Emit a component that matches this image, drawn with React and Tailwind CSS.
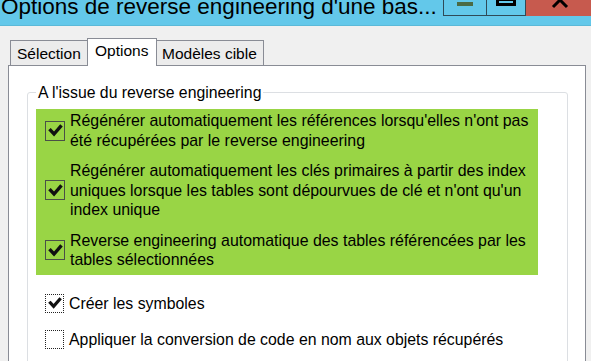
import React from 'react'

const GREEN_ITEMS = [
  [
    "Régénérer automatiquement les références lorsqu'elles n'ont pas",
    'été récupérées par le reverse engineering',
  ],
  [
    'Régénérer automatiquement les clés primaires à partir des index',
    "uniques lorsque les tables sont dépourvues de clé et n'ont qu'un",
    'index unique',
  ],
  [
    'Reverse engineering automatique des tables référencées par les',
    'tables sélectionnées',
  ],
]

function Check({ size }) {
  return (
    <svg width={size} height={size} viewBox="0 0 15 15" className="block">
      <polyline
        points="3.2,7.4 6.2,10.6 11.8,4.2"
        fill="none"
        stroke="#111"
        strokeWidth="3"
        strokeLinecap="square"
      />
    </svg>
  )
}

function TitleBar() {
  return (
    <div className="flex h-[26px] bg-[#63c8ea] border-b border-[#5bb9d8]">
      <div className="min-w-0 flex-1 overflow-hidden whitespace-nowrap pl-[1px] text-[22.5px] leading-[22px] -mt-[4px] text-black">
        Options de reverse engineering d'une bas...
      </div>
      <div className="flex h-[16px] items-start">
        <div className="relative h-[16px] w-[44px] border-x border-b border-[#2f4a57]">
          <div className="absolute left-[13px] top-[2px] h-[4px] w-[16px] bg-[#4b6b45]" />
        </div>
        <div className="relative h-[16px] w-[39px] border-r border-b border-[#2f4a57]">
          <div className="absolute left-[9px] -top-[2px] h-[8px] w-[20px] border-[3px] border-black" />
        </div>
        <div className="relative h-[16px] w-[65px] bg-[#c75a4e]">
          <svg width="65" height="16" className="absolute left-0 top-0">
            <polyline points="27,7 34,0 41,7" fill="none" stroke="#000" strokeWidth="3" />
          </svg>
        </div>
      </div>
    </div>
  )
}

function Tabs() {
  return (
    <div className="mt-[12px] flex h-[27px] items-end pl-[10px] text-[15.5px] leading-[18px]">
      <div className="h-[25px] w-[77px] border-l border-t border-[#898c95] bg-[#ececec] pl-[6px] pt-[4px]">
        Sélection
      </div>
      <div className="relative z-10 -mb-px h-[28px] w-[70px] border-x border-t border-[#898c95] bg-white pl-[7px] pt-[3px]">
        Options
      </div>
      <div className="h-[25px] w-[107px] border-r border-t border-[#898c95] bg-[#ececec] pl-[5px] pt-[4px]">
        Modèles cible
      </div>
    </div>
  )
}

export default function App() {
  return (
    <div className="h-[361px] w-[591px] overflow-hidden bg-[#f0f0f0] font-['Liberation_Sans',Arial,sans-serif] text-black">
      <TitleBar />
      <Tabs />
      <div className="ml-[8px] h-[400px] w-[578px] border border-[#898c95] bg-white pr-[17px] pl-[18px] pt-[26px]">
        {/* groupe */}
        <div className="relative h-[320px] rounded-[3px] border border-[#dcdfe3]">
          <span className="absolute -top-[8px] left-[8px] bg-white px-[2px] text-[15.8px] leading-[16px]">
            A l'issue du reverse engineering
          </span>
          <div className="ml-[8px] mt-[16px] flex w-[502px] flex-col gap-[11px] bg-[#99d545] pb-[5px] pl-[9px] pt-[2px] text-[15.9px] leading-[19.5px]">
            {GREEN_ITEMS.map((lines, i) => (
              <div key={i} className="flex items-center gap-[5px]">
                <span className="grid h-[20px] w-[20px] shrink-0 place-items-center border-[1.5px] border-[#4a5047]">
                  <Check size={17} />
                </span>
                <div className="whitespace-nowrap">
                  {lines.map((l) => (
                    <div key={l}>{l}</div>
                  ))}
                </div>
              </div>
            ))}
          </div>
          <div className="mt-[19px] flex flex-col gap-[16.5px] pl-[17px] text-[15.85px] leading-[19.5px]">
            <div className="flex items-center gap-[5px]">
              <span className="grid h-[19px] w-[19px] shrink-0 place-items-center border border-dotted border-[#222] bg-white">
                <Check size={16} />
              </span>
              <span>Créer les symboles</span>
            </div>
            <div className="flex items-center gap-[5px]">
              <span className="h-[19px] w-[19px] shrink-0 border border-dotted border-[#222] bg-white" />
              <span>Appliquer la conversion de code en nom aux objets récupérés</span>
            </div>
          </div>
        </div>
      </div>
    </div>
  )
}
